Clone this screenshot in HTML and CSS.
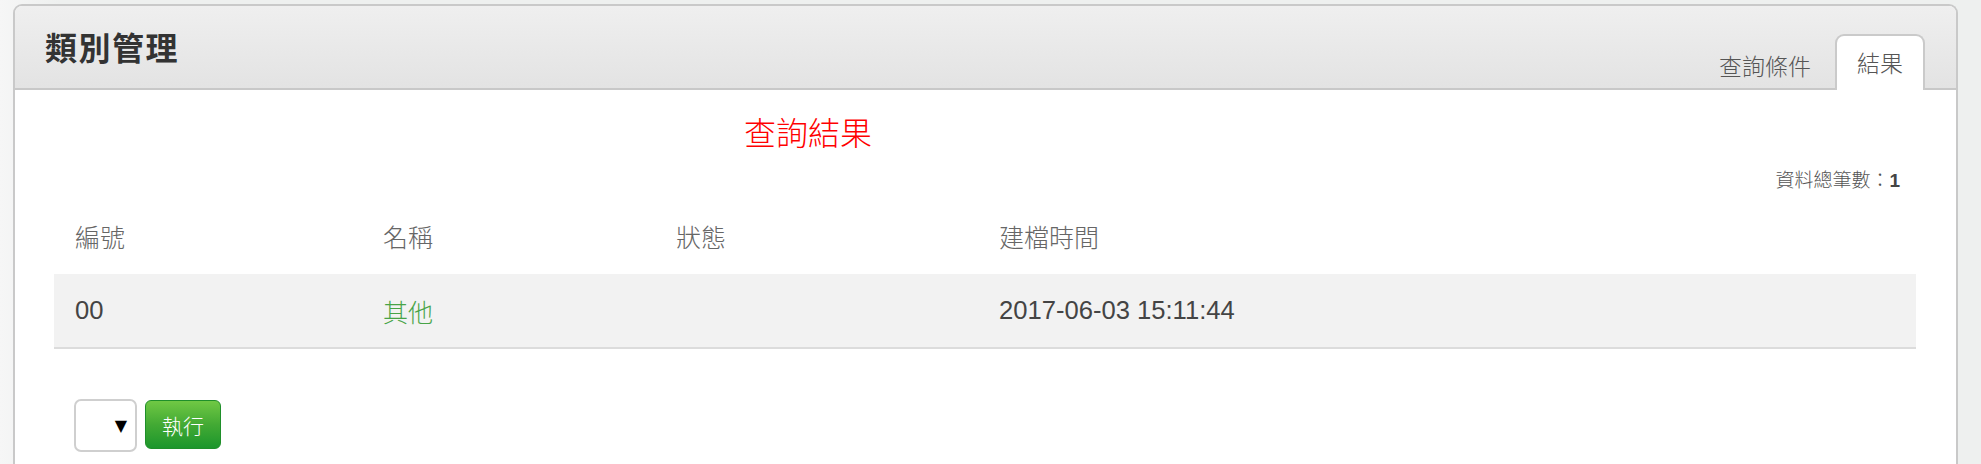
FILE: index.html
```html
<!DOCTYPE html>
<html lang="zh-Hant">
<head>
<meta charset="utf-8">
<title>類別管理</title>
<link rel="stylesheet" href="styles.css">
</head>
<body>
<div class="panel">
  <div class="panel-head">
    <h1 class="panel-title">類別管理</h1>
    <div class="tabs">
      <div class="tab">查詢條件</div>
      <div class="tab tab-active">結果</div>
    </div>
  </div>
  <div class="panel-body">
    <div class="result-title">查詢結果</div>
    <div class="count-row"><span class="count">資料總筆數：<b>1</b></span></div>
    <div class="table">
      <div class="row row-head">
        <div class="cell">編號</div>
        <div class="cell">名稱</div>
        <div class="cell">狀態</div>
        <div class="cell">建檔時間</div>
      </div>
      <div class="row row-data">
        <div class="cell">00</div>
        <div class="cell link">其他</div>
        <div class="cell"></div>
        <div class="cell">2017-06-03 15:11:44</div>
      </div>
    </div>
    <div class="actions">
      <div class="select"><span class="arrow">▼</span></div>
      <button class="btn-go">執行</button>
    </div>
  </div>
</div>
</body>
</html>
```
FILE: styles.css
```css
html, body {
  margin: 0;
  padding: 0;
  height: 100%;
}
body {
  background: linear-gradient(to right, #f6f6f6 0, #eef0ef 60px, #eef0ef 100%);
  font-family: "Liberation Sans", "Noto Sans CJK TC", sans-serif;
  overflow: hidden;
}
.panel {
  margin: 4px 23px 0 13px;
  height: 460px;
  box-sizing: border-box;
  border: 2px solid #c9c9c9;
  border-bottom: none;
  border-radius: 9px 9px 0 0;
  background: #fff;
  box-shadow: inset 1px 1px 0 #fff;
}
.panel-head {
  display: flex;
  justify-content: space-between;
  align-items: flex-end;
  height: 82px;
  border-bottom: 2px solid #c8c8c8;
  border-radius: 7px 7px 0 0;
  background: linear-gradient(to bottom, #efefef 0, #e3e3e3 100%);
  padding: 0 31px 0 30px;
}
.panel-title {
  margin: 0;
  align-self: center;
  font-family: "Noto Sans CJK TC", sans-serif;
  font-size: 32px;
  font-weight: 700;
  color: #333;
  letter-spacing: 1.5px;
  line-height: 40px;
  padding-bottom: 2px;
}
.tabs {
  display: flex;
  align-items: flex-end;
  margin-bottom: -2px;
}
.tab {
  font-family: "Noto Sans CJK TC", sans-serif;
  font-weight: 300;
  font-size: 23px;
  color: #555;
  height: 54px;
  line-height: 54px;
  padding: 0 22px;
  box-sizing: border-box;
  border: 2px solid transparent;
  border-bottom: none;
  border-radius: 9px 9px 0 0;
}
.tab-active {
  background: #fff;
  border-color: #cacaca;
  height: 56px;
  padding: 0 20px;
  line-height: 52px;
}
.panel-body {
  padding: 21px 40px 0 39px;
}
.result-title {
  font-family: "Noto Sans CJK TC", sans-serif;
  font-weight: 300;
  font-size: 32px;
  line-height: 40px;
  color: #ff0000;
  padding-left: 690px;
}
.count-row {
  margin-top: 18px;
  display: flex;
  justify-content: flex-end;
  padding-right: 16px;
}
.count {
  font-size: 19px;
  line-height: 24px;
  color: #555;
  font-weight: 300;
}
.count b {
  font-weight: 700;
  color: #444;
}
.table {
  margin-top: 5px;
}
.row {
  display: grid;
  grid-template-columns: 308px 293px 323px 1fr;
  align-items: center;
}
.row-head {
  height: 76px;
  color: #666;
  font-size: 25px;
  font-weight: 300;
}
.row-data {
  height: 73px;
  background: #f2f2f2;
  border-bottom: 2px solid #dcdcdc;
  color: #444;
  font-size: 25.6px;
}
.cell {
  padding-left: 21px;
}
.link {
  color: #47a447;
  font-size: 25px;
  font-weight: 300;
}
.actions {
  display: flex;
  align-items: center;
  gap: 8px;
  margin-top: 50px;
  padding-left: 20px;
}
.select {
  width: 63px;
  height: 53px;
  box-sizing: border-box;
  border: 2px solid #cfcfcf;
  border-radius: 7px;
  background: #fff;
  display: flex;
  align-items: center;
  justify-content: flex-end;
  padding-right: 8px;
}
.arrow {
  font-size: 16px;
  color: #000;
  font-family: "DejaVu Sans", sans-serif;
}
.btn-go {
  width: 76px;
  height: 49px;
  box-sizing: border-box;
  border: 1px solid #1f8f2a;
  border-radius: 6px;
  background: linear-gradient(to bottom, #70c844 0, #43aa34 50%, #1c962c 100%);
  color: #fff;
  font-family: "Noto Sans CJK TC", sans-serif;
  font-weight: 300;
  font-size: 21px;
  padding: 0;
  margin-top: -2px;
}
```
